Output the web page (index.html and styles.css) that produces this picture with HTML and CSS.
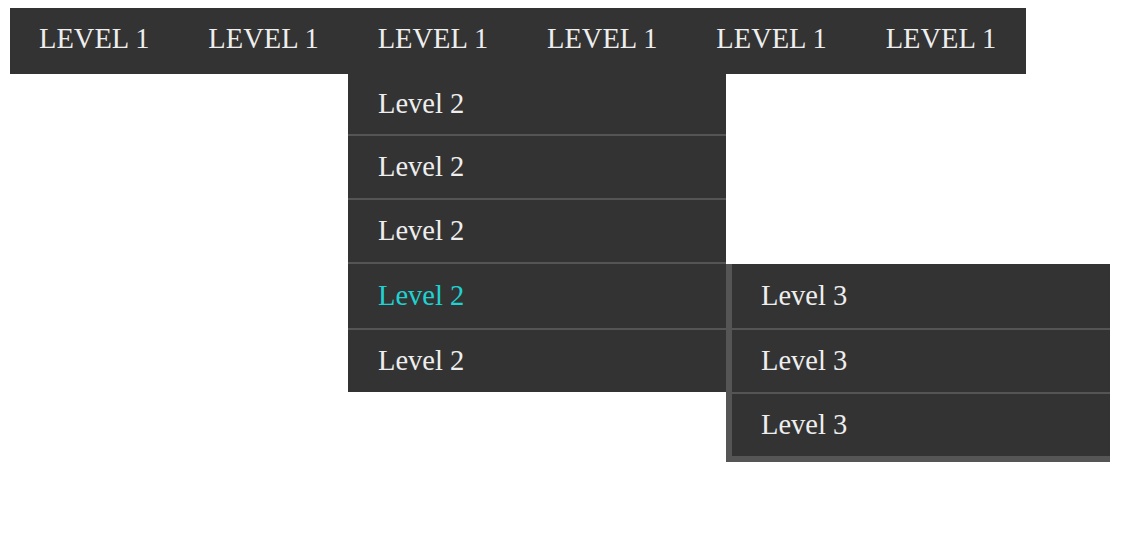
FILE: index.html
```html
<!DOCTYPE html>
<html lang="en">
<head>
  <meta charset="UTF-8" />
  <meta name="viewport" content="width=device-width, initial-scale=1.0" />
  <title>Menu</title>
  <link rel="stylesheet" href="styles.css">
</head>
<body>
  <nav class="menu">
    <div class="level-1">
      <a class="top-link" href="#">LEVEL 1</a>
      <a class="top-link" href="#">LEVEL 1</a>
      <a class="top-link" href="#">LEVEL 1</a>
      <a class="top-link" href="#">LEVEL 1</a>
      <a class="top-link" href="#">LEVEL 1</a>
      <a class="top-link" href="#">LEVEL 1</a>
    </div>

    <!-- aufgeklappte Untermenüs unter dem dritten Punkt -->
    <div class="submenus">
      <div class="dropdown level-2">
        <a class="sub-link short" href="#">Level 2</a>
        <a class="sub-link" href="#">Level 2</a>
        <a class="sub-link" href="#">Level 2</a>
        <a class="sub-link tall active" href="#">Level 2</a>
        <a class="sub-link" href="#">Level 2</a>
      </div>
      <div class="dropdown level-3">
        <a class="sub-link tall" href="#">Level 3</a>
        <a class="sub-link" href="#">Level 3</a>
        <a class="sub-link" href="#">Level 3</a>
      </div>
    </div>
  </nav>
</body>
</html>
```

FILE: styles.css
```css
body {
  margin: 8px 10px;
  font-family: 'Liberation Serif', 'Times New Roman', serif;
  background-color: #fff;
}

/* Hauptleiste */
.level-1 {
  display: flex;
  width: 1016px;
  padding-bottom: 4px;
  background-color: #333;
}

.top-link,
.sub-link {
  display: block;
  color: #eee;
  text-decoration: none;
  font-size: 28.5px;
}

.top-link {
  flex: 1;
  line-height: 62px;
  padding-left: 29px;
}

/* Untermenüs */
.submenus {
  display: flex;
  align-items: flex-start;
  padding-left: 338px;
}

.dropdown {
  width: 378px;
  background-color: #333;
}

.level-3 {
  margin-top: 190px;
  border-left: 6px solid #555;
  border-bottom: 6px solid #555;
}

.sub-link {
  line-height: 62px;
  padding-left: 30px;
}

.sub-link + .sub-link {
  border-top: 2px solid #555;
}

.level-3 .sub-link {
  padding-left: 29px;
}

.sub-link.short {
  line-height: 60px;
}

.sub-link.tall {
  line-height: 64px;
}

.sub-link.active {
  color: #1fd1d1;
}
```
